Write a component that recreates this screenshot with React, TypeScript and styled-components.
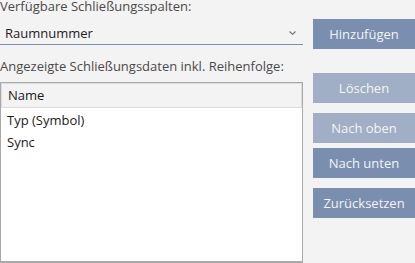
import React from 'react';
import styled, { createGlobalStyle } from 'styled-components';

const GlobalStyle = createGlobalStyle`
  html, body {
    margin: 0;
    padding: 0;
    background: #f3f3f3;
    overflow: hidden;
  }
  body {
    font-family: 'Open Sans', 'Noto Sans', sans-serif;
    font-size: 14px;
  }
`;

const columns = ['Name', 'Typ (Symbol)', 'Sync'];

export default function App() {
  return (
    <>
      <GlobalStyle />
      <Page>
        <LeftColumn>
          <FieldLabel>Verfügbare Schließungsspalten:</FieldLabel>
          <Select>
            <SelectText>Raumnummer</SelectText>
            <Chevron viewBox="0 0 7 4">
              <path d="M0.5 0.5 L3.5 3.3 L6.5 0.5" fill="none" stroke="#707070" strokeWidth="1.1" />
            </Chevron>
          </Select>
          <FieldLabel $spaced>Angezeigte Schließungsdaten inkl. Reihenfolge:</FieldLabel>
          <List>
            {columns.map((name, i) => (
              <ListRow key={name} $header={i === 0}>
                {name}
              </ListRow>
            ))}
          </List>
        </LeftColumn>
        <RightColumn>
          <ActionButton $top={19}>Hinzufügen</ActionButton>
          <ActionButton $top={24} disabled>
            Löschen
          </ActionButton>
          <ActionButton $top={10} disabled>
            Nach oben
          </ActionButton>
          <ActionButton $top={5}>Nach unten</ActionButton>
          <ActionButton $top={10}>Zurücksetzen</ActionButton>
        </RightColumn>
      </Page>
    </>
  );
}

const Page = styled.div`
  display: grid;
  grid-template-columns: 303px 102px;
  column-gap: 10px;
  width: 415px;
  height: 263px;
`;

const LeftColumn = styled.div`
  display: flex;
  flex-direction: column;
  min-height: 0;
`;

const RightColumn = styled.div`
  display: flex;
  flex-direction: column;
`;

const FieldLabel = styled.div<{ $spaced?: boolean }>`
  color: #4a4a4a;
  font-size: 13px;
  line-height: 16px;
  margin-top: ${(p) => (p.$spaced ? '13px' : '-2px')};
  white-space: nowrap;
`;

const Select = styled.div`
  display: flex;
  align-items: flex-end;
  justify-content: space-between;
  height: 27px;
  margin-top: 3px;
  padding: 0 7px 0 5px;
  border-bottom: 1px solid #7b8fae;
`;

const SelectText = styled.span`
  color: #222;
  font-size: 13px;
  line-height: 16px;
  padding-bottom: 3px;
`;

const Chevron = styled.svg`
  width: 7px;
  height: 4px;
  align-self: center;
  margin-top: 4px;
`;

const List = styled.div`
  flex: 1;
  margin-top: 8px;
  background: #fff;
  border: 1px solid #a9a9a9;
  border-bottom-width: 2px;
`;

const ListRow = styled.div<{ $header?: boolean }>`
  height: ${(p) => (p.$header ? '23px' : '22px')};
  line-height: ${(p) => (p.$header ? '23px' : '22px')};
  padding-left: 6px;
  color: #1a1a1a;
  font-size: 13px;
  background: ${(p) => (p.$header ? '#f3f3f3' : 'transparent')};
  border: ${(p) => (p.$header ? '1px solid #dcdcdc' : 'none')};
  margin-bottom: ${(p) => (p.$header ? '1px' : '0')};
`;

const ActionButton = styled.button<{ $top: number }>`
  height: 30px;
  margin-top: ${(p) => p.$top}px;
  padding: 0;
  border: none;
  background: #7a8eaf;
  color: #f4f4f4;
  font-family: inherit;
  font-size: 13px;

  &:disabled {
    background: #a0afc6;
    color: #f4f4f4;
  }
`;
